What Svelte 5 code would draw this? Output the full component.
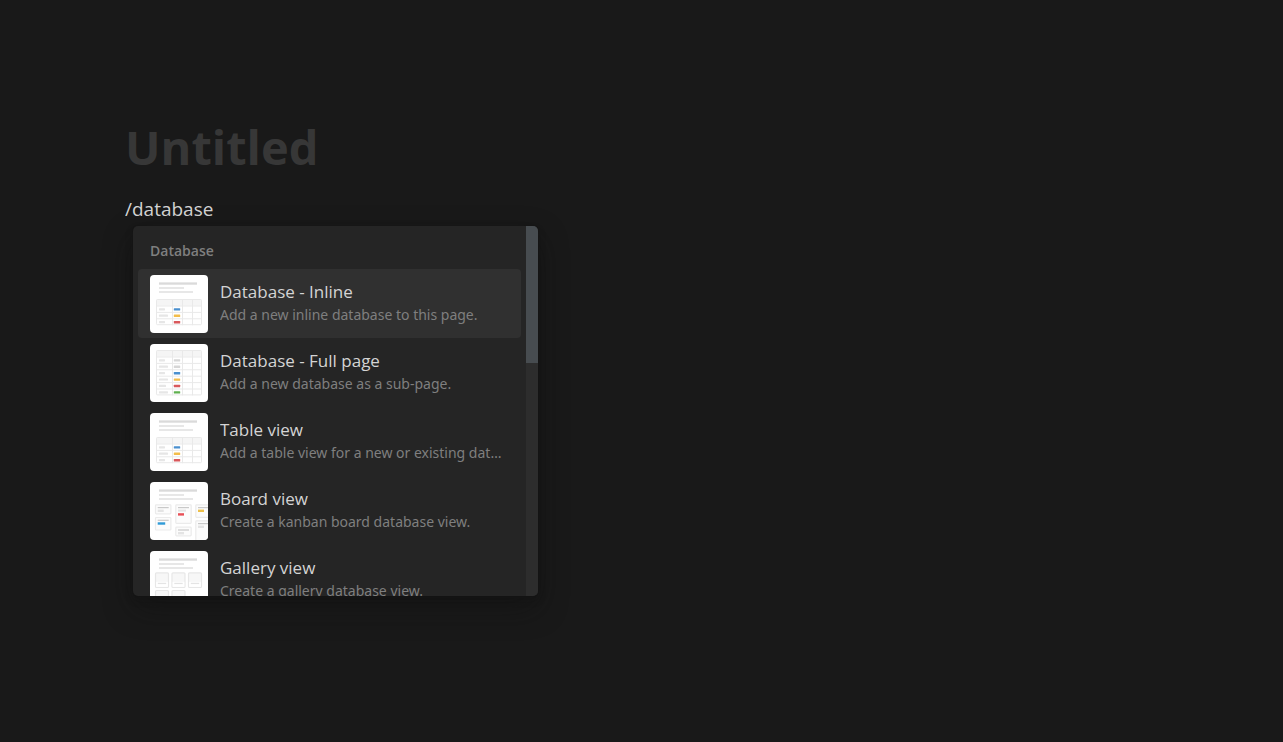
<script>
	let title = '';
	let block = '/database';
	let selected = 0;
	let scrollTop = 0;
	let scrollRange = 0;

	const items = [
		{ icon: 'table', name: 'Database - Inline', description: 'Add a new inline database to this page.' },
		{ icon: 'full', name: 'Database - Full page', description: 'Add a new database as a sub-page.' },
		{ icon: 'table', name: 'Table view', description: 'Add a table view for a new or existing database.' },
		{ icon: 'board', name: 'Board view', description: 'Create a kanban board database view.' },
		{ icon: 'gallery', name: 'Gallery view', description: 'Create a gallery database view.' }
	];

	const grey = '#d6d6d6';
	const blue = '#4a90cf';
	const yellow = '#f3bd4b';
	const red = '#d9595c';
	const green = '#5fb04f';

	// rows of the small table previews: tag colour and first column width
	const tables = {
		table: { top: 24, header: 7, rows: [[blue, 6], [yellow, 9], [red, 6]] },
		full: { top: 6, header: 7, rows: [[grey, 6], [grey, 9], [blue, 6], [yellow, 9], [red, 7], [green, 9]] }
	};

	const cards = [
		{ x: 5.5, y: 22.8, h: 9, tag: '#e4e4e4' },
		{ x: 5.5, y: 35.5, h: 12.5, tag: '#2f9bd8' },
		{ x: 25.8, y: 22.8, h: 18.5, tag: '#e85057', extra: true },
		{ x: 25.8, y: 45.2, h: 8.6, tag: '#e4e4e4' },
		{ x: 45.8, y: 22.8, h: 12.5, tag: '#edc04a' },
		{ x: 45.8, y: 38.8, h: 24, tag: '#e4e4e4' }
	];

	const tiles = [[5.5, 21.8], [22, 21.8], [38.5, 21.8], [5.5, 39.5], [22, 39.5]];

	function handleScroll(event) {
		const el = event.target;
		scrollRange = el.scrollHeight - el.clientHeight;
		scrollTop = el.scrollTop;
	}

	$: progress = scrollRange > 0 ? scrollTop / scrollRange : 0;
</script>

<main class="page">
	<input class="title" type="text" placeholder="Untitled" aria-label="Page title" bind:value={title} />
	<input class="block" type="text" aria-label="Text block" bind:value={block} />

	<div class="menu">
		<div class="menu-scroll" on:scroll={handleScroll}>
			<h2 class="section">Database</h2>
			<div class="items">
				{#each items as item, i}
					<button class="item" class:selected={i === selected} on:mouseenter={() => (selected = i)}>
						<svg class="preview" width="58" height="58" viewBox="0 0 58 58" aria-hidden="true">
							<rect width="58" height="58" fill="#fff" />
							{#if item.icon !== 'full'}
								<rect x="9" y="7.4" width="38" height="2.3" fill="#dadada" />
								<rect x="9" y="12.2" width="25" height="1.6" fill="#e2e2e2" />
								<rect x="9" y="16.2" width="34" height="1.6" fill="#e2e2e2" />
							{/if}
							{#if tables[item.icon]}
								{@const t = tables[item.icon]}
								{@const height = t.header + t.rows.length * 6.4}
								<rect x="6.5" y={t.top + 0.5} width="45" height={height - 1} rx="1" fill="#fff" />
								<rect x="6.5" y={t.top + 0.5} width="45" height={t.header - 1} fill="#f5f5f5" />
								{#each t.rows as [color, width], r}
									{@const y = t.top + t.header + r * 6.4}
									<path d="M6 {y}H52" stroke="#e9e9e9" />
									<rect x="9" y={y + 2.2} {width} height="2.2" rx="0.6" fill="#e6e6e6" />
									<rect x="23.8" y={y + 2.2} width="6.4" height="2.4" rx="0.5" fill={color} />
								{/each}
								<path d="M22.5 {t.top}v{height}M32.5 {t.top}v{height}M42.5 {t.top}v{height}" stroke="#e9e9e9" />
								<rect x="6.5" y={t.top + 0.5} width="45" height={height - 1} rx="1" fill="none" stroke="#e9e9e9" />
							{:else if item.icon === 'board'}
								{#each cards as card}
									<rect x={card.x} y={card.y} width="15.4" height={card.h} rx="0.8" fill="#fcfcfc" stroke="#ebebeb" stroke-width="1.2" />
									<rect x={card.x + 2.2} y={card.y + 2.2} width="11" height="1.2" fill="#c9c9c9" />
									{#if card.extra}
										<rect x={card.x + 2.2} y={card.y + 4.8} width="8" height="2" fill="#e4e4e4" />
									{/if}
									<rect x={card.x + 2.2} y={card.y + (card.extra ? 8.4 : 4.8)} width={card.tag === '#2f9bd8' ? 7.5 : 6} height="2.4" fill={card.tag} />
								{/each}
							{:else}
								{#each tiles as [x, y]}
									<rect {x} {y} width="13" height="14.7" rx="1" fill="#f7f7f7" stroke="#e7e7e7" stroke-width="1.2" />
									<rect x={x + 0.6} y={y + 9} width="11.8" height="5" fill="#fff" />
									<rect x={x + 2.3} y={y + 10} width="8.4" height="1.3" fill="#e4e4e4" />
								{/each}
							{/if}
						</svg>
						<span class="text">
							<span class="name">{item.name}</span>
							<span class="description">{item.description}</span>
						</span>
					</button>
				{/each}
			</div>
		</div>
		<div class="track">
			<div class="thumb" style="top: {progress * 63}%"></div>
		</div>
	</div>
</main>

<style>
	:global(body) {
		margin: 0;
		background: #191919;
	}

	.page {
		display: flex;
		flex-direction: column;
		align-items: flex-start;
		padding: 111px 125px 64px;
		font-family: 'Segoe UI', 'Open Sans', 'Noto Sans', sans-serif;
		color: #d4d4d4;
	}

	.title,
	.block {
		width: 100%;
		padding: 0;
		border: none;
		outline: none;
		background: none;
		color: inherit;
		font-family: inherit;
	}

	.title {
		height: 72px;
		font-size: 47px;
		font-weight: 700;
	}

	.title::placeholder {
		color: #373737;
		opacity: 1;
	}

	.block {
		height: 32px;
		margin-top: 10px;
		font-size: 19px;
	}

	.menu {
		display: flex;
		width: 405px;
		max-width: 100%;
		height: 370px;
		margin: 1px 0 0 8px;
		border-radius: 5px;
		overflow: hidden;
		background: #252525;
		box-shadow: 0 0 0 1px rgba(15, 15, 15, 0.1), 0 4px 8px rgba(15, 15, 15, 0.2), 0 12px 30px rgba(15, 15, 15, 0.4);
	}

	.menu-scroll {
		flex: 1;
		min-width: 0;
		overflow-y: auto;
		scrollbar-width: none;
	}

	.section {
		margin: 0;
		padding: 14px 17px 7px;
		font-size: 14px;
		font-weight: 600;
		line-height: 22px;
		color: #7f7f7f;
	}

	.items {
		padding: 0 5px 5px;
	}

	.item {
		display: flex;
		align-items: center;
		gap: 12px;
		width: 100%;
		height: 69px;
		padding: 0 12px;
		border: none;
		border-radius: 4px;
		background: none;
		color: inherit;
		font-family: inherit;
		text-align: left;
		cursor: pointer;
	}

	.item.selected {
		background: #303030;
	}

	.preview {
		flex-shrink: 0;
		border-radius: 4px;
	}

	.text {
		display: flex;
		flex-direction: column;
		min-width: 0;
	}

	.name,
	.description {
		overflow: hidden;
		text-overflow: ellipsis;
		white-space: nowrap;
	}

	.name {
		font-size: 17px;
		line-height: 22px;
	}

	.description {
		font-family: 'Segoe UI', 'Noto Sans', sans-serif;
		font-size: 14px;
		line-height: 23px;
		color: #7f7f7f;
	}

	.track {
		position: relative;
		width: 12px;
		background: #2d2d2d;
	}

	.thumb {
		position: absolute;
		width: 100%;
		height: 37%;
		background: #474c50;
	}
</style>
